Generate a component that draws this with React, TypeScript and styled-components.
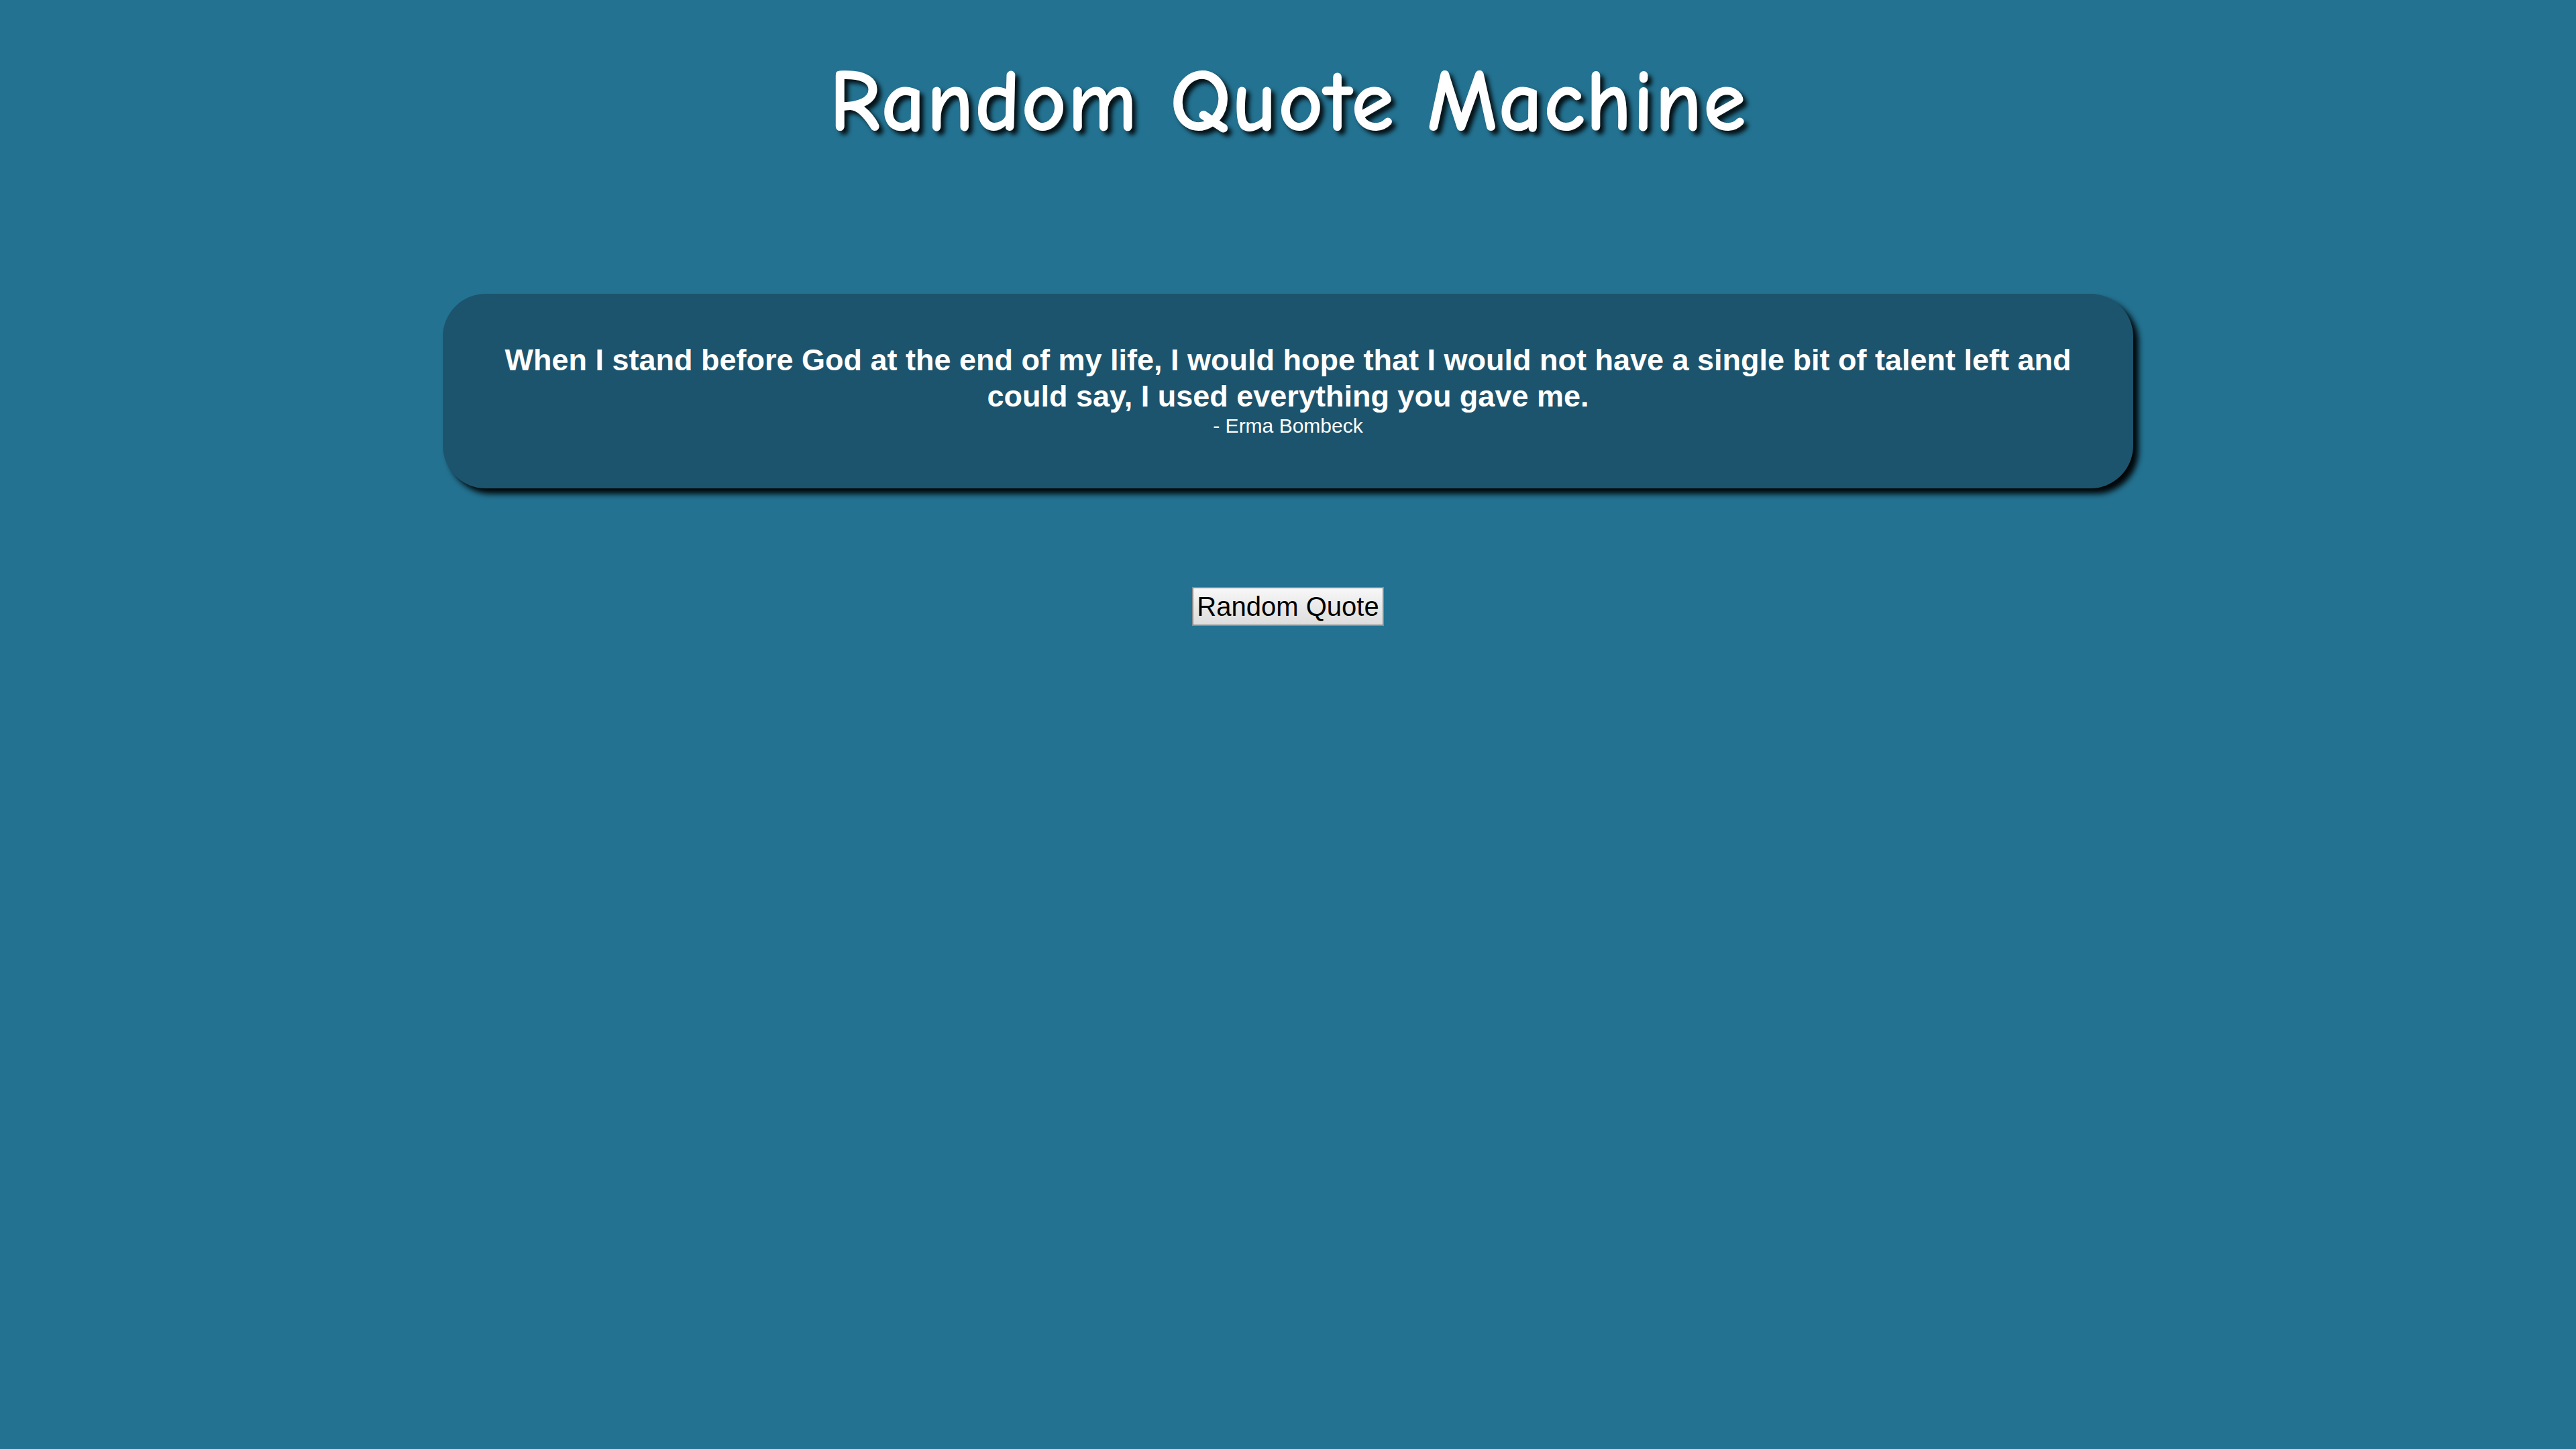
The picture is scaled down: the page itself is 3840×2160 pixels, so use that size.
import React from "react";
import styled, { createGlobalStyle } from "styled-components";

const GlobalStyle = createGlobalStyle`
  html, body {
    margin: 0;
    padding: 0;
    background: #237291;
    min-height: 100%;
  }
  body {
    font-family: "Liberation Sans", Arial, sans-serif;
  }
`;

const Page = styled.main`
  min-height: 2160px;
  display: flex;
  flex-direction: column;
  align-items: center;
  background: #237291;
`;

const Title = styled.h1`
  margin: 72px 0 0;
  height: 160px;
  line-height: 160px;
  font-family: "Comic Sans MS", "Comic Neue", "Lato", sans-serif;
  font-weight: 900;
  font-size: 131px;
  color: #ffffff;
  text-shadow: 6px 6px 6px rgba(0, 0, 0, 0.85);
  letter-spacing: 1px;
`;

const Card = styled.section`
  margin-top: 206px;
  width: 2520px;
  box-sizing: border-box;
  padding: 72px 70px 76px;
  background: #1d546d;
  border-radius: 64px;
  box-shadow: 8px 8px 8px rgba(0, 0, 0, 0.95);
  display: flex;
  flex-direction: column;
  align-items: center;
  color: #ffffff;
  text-align: center;
`;

const QuoteText = styled.p`
  margin: 0;
  font-family: "Liberation Sans", Arial, sans-serif;
  font-weight: 700;
  font-size: 45px;
  line-height: 54px;
`;

const Author = styled.p`
  margin: 0;
  font-family: "Liberation Sans", Arial, sans-serif;
  font-size: 30px;
  line-height: 34px;
`;

const QuoteButton = styled.button`
  margin-top: 147px;
  font-family: "Liberation Sans", Arial, sans-serif;
  font-size: 40px;
  line-height: 46px;
  padding: 4px 5px;
  color: #000000;
  background: linear-gradient(#f7f7f7, #dddddd);
  border: 2px solid #8c8c8c;
  border-radius: 0;
  cursor: pointer;
`;

export default function App() {
  return (
    <>
      <GlobalStyle />
      <Page>
        <Title>Random Quote Machine</Title>
        <Card>
          <QuoteText>
            When I stand before God at the end of my life, I would hope that I would not have a single bit of talent left and could say, I used everything you gave me.
          </QuoteText>
          <Author>- Erma Bombeck</Author>
        </Card>
        <QuoteButton>Random Quote</QuoteButton>
      </Page>
    </>
  );
}
